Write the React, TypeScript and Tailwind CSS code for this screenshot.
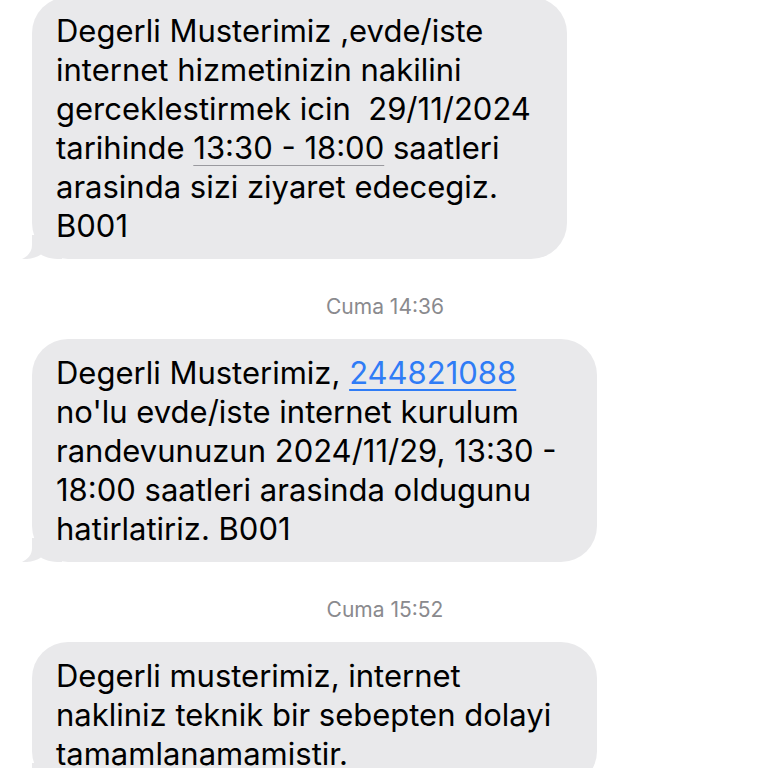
const font = { fontFamily: '"Inter", "Liberation Sans", sans-serif' };

function Tail() {
    return (
        <svg
            className="absolute bottom-0 left-[-10px]"
            width="40"
            height="24"
            viewBox="0 0 40 24"
        >
            <path
                d="M10 0 V10 C10 17 6 21 0 24 C8 24.5 14 22.5 19 19.5 C23 22 28 24 40 24 V0 Z"
                fill="#e9e9eb"
            />
        </svg>
    );
}

function Bubble({ lines, width }: { lines: React.ReactNode[]; width: string }) {
    return (
        <div className={`relative ml-[32px] rounded-[36px] bg-[#e9e9eb] py-[14px] pl-[24px] pr-[20px] ${width}`}>
            {lines.map((l, i) => (
                <div key={i} className="relative z-10 whitespace-pre text-[31px] leading-[39px] text-black">
                    {l}
                </div>
            ))}
            <Tail />
        </div>
    );
}

function Stamp({ text }: { text: string }) {
    return (
        <div className="flex justify-center pl-[2px] text-[21px] leading-[24px] text-[#8a8a8e]">
            {text}
        </div>
    );
}

export default function App() {
    return (
        <main className="h-[768px] w-[768px] overflow-hidden bg-white" style={font}>
            <div className="-mt-[3px] flex flex-col">
                <Bubble
                    width="w-[535px]"
                    lines={[
                        "Degerli Musterimiz ,evde/iste",
                        "internet hizmetinizin nakilini",
                        "gerceklestirmek icin  29/11/2024",
                        <>
                            tarihinde{" "}
                            <span className="underline decoration-[#9a9a9f] decoration-1 underline-offset-[6px]">
                                13:30 - 18:00
                            </span>{" "}
                            saatleri
                        </>,
                        "arasinda sizi ziyaret edecegiz.",
                        "B001",
                    ]}
                />
                <div className="mt-[36px]">
                    <Stamp text="Cuma 14:36" />
                </div>
                <div className="mt-[20px]">
                    <Bubble
                        width="w-[565px]"
                        lines={[
                            <>
                                Degerli Musterimiz,{" "}
                                <span className="text-[#2f7cf6] underline decoration-2 underline-offset-[5px]">
                                    244821088
                                </span>
                            </>,
                            "no'lu evde/iste internet kurulum",
                            "randevunuzun 2024/11/29, 13:30 -",
                            "18:00 saatleri arasinda oldugunu",
                            "hatirlatiriz. B001",
                        ]}
                    />
                </div>
                <div className="mt-[36px]">
                    <Stamp text="Cuma 15:52" />
                </div>
                <div className="mt-[20px]">
                    <Bubble
                        width="w-[565px]"
                        lines={[
                            "Degerli musterimiz, internet",
                            "nakliniz teknik bir sebepten dolayi",
                            "tamamlanamamistir.",
                            "",
                        ]}
                    />
                </div>
            </div>
        </main>
    );
}
